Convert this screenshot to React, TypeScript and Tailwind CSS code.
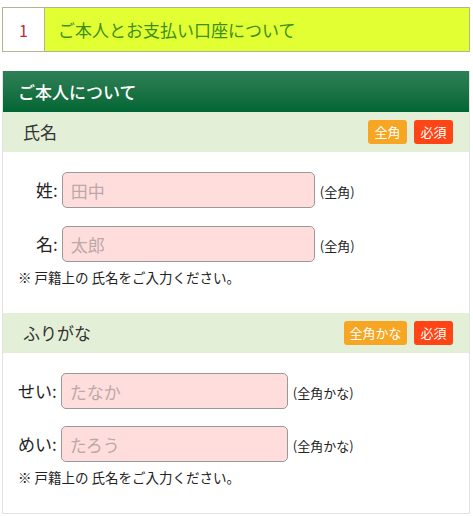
import React from 'react';

const font = { fontFamily: '"Noto Sans CJK JP", "Noto Sans", sans-serif' };

const Badge = ({ label, color, width }: { label: string; color: string; width: string }) => (
  <span className={`${color} ${width} h-6 rounded-[3px] text-white text-[13px] leading-6 text-center`}>{label}</span>
);

const FieldHeader = ({ title, badge, badgeWidth }: { title: string; badge: string; badgeWidth: string }) => (
  <div className="h-10 bg-[#e3f0d7] flex items-center justify-between pl-5 pr-4">
    <span className="text-[17px] text-[#333]">{title}</span>
    <div className="flex gap-[7px]">
      <Badge label={badge} color="bg-[#f6a623]" width={badgeWidth} />
      <Badge label="必須" color="bg-[#ff4415]" width="w-[39px]" />
    </div>
  </div>
);

const InputRow = ({ label, placeholder, hint, inputWidth, indent }: { label: string; placeholder: string; hint: string; inputWidth: string; indent: string }) => (
  <div className={`flex items-center ${indent}`}>
    <span className="text-[17px] text-[#222] mr-[4px]">{label}</span>
    <input
      placeholder={placeholder}
      className={`${inputWidth} h-9 bg-[#ffdddd] border border-[#999] rounded-[5px] pl-2 text-[17px] placeholder:text-[#bba9a9] outline-none`}
    />
    <span className="ml-[5px] mt-1 text-[13px] text-[#222]">{hint}</span>
  </div>
);

export default function App() {
  return (
    <div className="w-[473px] h-[516px] bg-white pt-[7px] pl-[2px]" style={font}>
      {/* step title */}
      <div className="w-[468px] h-[45px] flex border border-[#b3b58f]">
        <div className="w-[42px] bg-white border-r border-[#b3b58f] flex items-center justify-center text-[16px] text-[#c4283f]">1</div>
        <div className="flex-1 bg-[#e1ff33] flex items-center pl-[13px] text-[17px] text-[#3d8f1c]">ご本人とお支払い口座について</div>
      </div>

      <div className="w-[468px] mt-[19px] h-[443px] border-x border-b border-[#e2e2e2]">
        <div className="h-[41px] bg-gradient-to-b from-[#2e8057] to-[#006633] flex items-center pl-[15px] text-white text-[17px] font-medium">
          ご本人について
        </div>

        <FieldHeader title="氏名" badge="全角" badgeWidth="w-[39px]" />
        <div className="pt-5 flex flex-col gap-[18px]">
          <InputRow label="姓:" placeholder="田中" hint="(全角)" inputWidth="w-[253px]" indent="pl-[33px]" />
          <InputRow label="名:" placeholder="太郎" hint="(全角)" inputWidth="w-[253px]" indent="pl-[33px]" />
        </div>
        <p className="pl-[15px] mt-[5px] text-[13.5px] text-[#222] h-[46px]">※ 戸籍上の 氏名をご入力ください。</p>

        <FieldHeader title="ふりがな" badge="全角かな" badgeWidth="w-[63px]" />
        <div className="pt-5 flex flex-col gap-[17px]">
          <InputRow label="せい:" placeholder="たなか" hint="(全角かな)" inputWidth="w-[227px]" indent="pl-[15px]" />
          <InputRow label="めい:" placeholder="たろう" hint="(全角かな)" inputWidth="w-[227px]" indent="pl-[15px]" />
        </div>
        <p className="pl-[15px] mt-[5px] text-[13.5px] text-[#222]">※ 戸籍上の 氏名をご入力ください。</p>
      </div>
    </div>
  );
}
